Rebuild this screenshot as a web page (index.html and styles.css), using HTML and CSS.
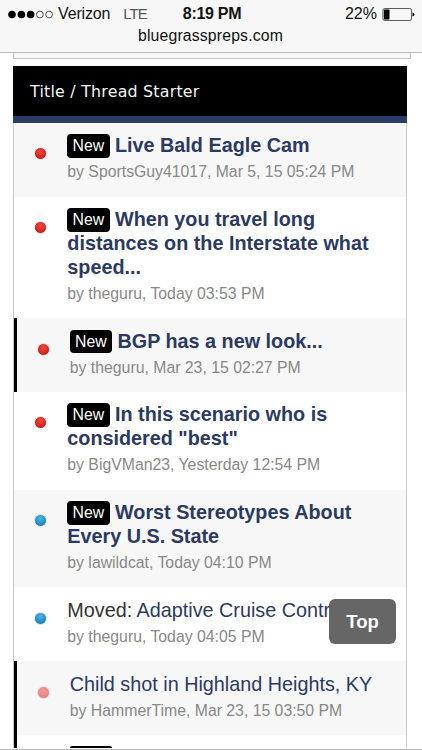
FILE: index.html
```html
<!DOCTYPE html>
<html lang="en">
<head>
<meta charset="utf-8">
<meta name="viewport" content="width=device-width">
<title>bluegrasspreps.com</title>
<link rel="stylesheet" href="styles.css">
</head>
<body>
<header class="browser">
  <div class="status">
    <div class="carrier">
      <svg width="46" height="9" viewBox="0 0 46 9" aria-hidden="true">
        <circle cx="4" cy="4.5" r="3.8"/><circle cx="13.4" cy="4.5" r="3.8"/><circle cx="22.6" cy="4.5" r="3.8"/>
        <g fill="none" stroke="#222" stroke-width=".8"><circle cx="31.9" cy="4.5" r="3.4"/><circle cx="41.1" cy="4.5" r="3.4"/></g>
      </svg>
      <span class="name">Verizon</span><span class="lte">LTE</span>
    </div>
    <div class="clock">8:19 PM</div>
    <div class="power">
      <span>22%</span>
      <svg width="34" height="13" viewBox="0 0 34 13" aria-hidden="true">
        <rect x=".9" y=".5" width="28.6" height="12" rx="1.8" fill="none" stroke="#333" stroke-width=".8"/>
        <rect x="1.9" y="1.5" width="5.6" height="10" rx=".7"/>
        <path d="M30.5 4.4q2 .4 2 2.1t-2 2.1z"/>
      </svg>
    </div>
  </div>
  <div class="address">bluegrasspreps.com</div>
</header>
<main>
  <div class="strip"></div>
  <section class="threads">
    <h1>Title / Thread Starter</h1>
    <ul>
      <li class="alt"><i class="dot red"></i><div><h2><b class="new">New</b> Live Bald Eagle Cam</h2><p>by SportsGuy41017, Mar 5, 15 05:24 PM</p></div></li>
      <li><i class="dot red"></i><div><h2><b class="new">New</b> When you travel long<br>distances on the Interstate what<br>speed...</h2><p>by theguru, Today 03:53 PM</p></div></li>
      <li class="alt mark"><i class="dot red"></i><div><h2><b class="new">New</b> BGP has a new look...</h2><p>by theguru, Mar 23, 15 02:27 PM</p></div></li>
      <li><i class="dot red"></i><div><h2><b class="new">New</b> In this scenario who is<br>considered "best"</h2><p>by BigVMan23, Yesterday 12:54 PM</p></div></li>
      <li class="alt"><i class="dot blue"></i><div><h2><b class="new">New</b> Worst Stereotypes About<br>Every U.S. State</h2><p>by lawildcat, Today 04:10 PM</p></div></li>
      <li><i class="dot blue"></i><div><h2 class="read"><span>Moved:</span> Adaptive Cruise Control</h2><p>by theguru, Today 04:05 PM</p></div></li>
      <li class="alt mark"><i class="dot red faded"></i><div><h2 class="read">Child shot in Highland Heights, KY</h2><p>by HammerTime, Mar 23, 15 03:50 PM</p></div></li>
      <li class="mark last"><b class="peek"></b></li>
    </ul>
  </section>
</main>
<button class="top">Top</button>
</body>
</html>
```
FILE: styles.css
```css
* { box-sizing: border-box; }
body {
  margin: 0;
  height: 750px;
  overflow: hidden;
  position: relative;
  background: #fff;
  font-family: "Liberation Sans", Arial, sans-serif;
  border-bottom: 1px solid #b5b5b5;
}
h1, h2, p, ul { margin: 0; padding: 0; }
.browser {
  height: 53px;
  background: #f7f7f7;
  border-bottom: 1px solid #bababa;
  color: #111;
}
.status {
  display: grid;
  grid-template-columns: 1fr auto 1fr;
  height: 27px;
  padding: 1px 6px 0 8px;
  align-items: center;
  font-size: 16px;
  line-height: 26px;
}
.carrier { display: flex; align-items: center; white-space: nowrap; }
.name { margin-left: 4px; letter-spacing: -.15px; }
.lte { margin-left: 13px; color: #555; font-size: 15px; letter-spacing: -1px; }
.clock { font-weight: bold; font-size: 16px; letter-spacing: -.3px; }
.power { display: flex; align-items: center; justify-content: flex-end; gap: 5px; }
.address { text-align: center; font-size: 15.8px; line-height: 18px; letter-spacing: .15px; padding-right: 1px; }
.strip {
  height: 6px;
  margin: 0 11px 7px 13px;
  border: 1px solid #c6c6c6;
  border-top: 0;
  background: #f7f7f7;
}
.threads { margin: 0 15px 0 13px; }
h1 {
  height: 57px;
  background: #000;
  color: #f5f5f5;
  border-bottom: 7px solid #2e3a66;
  padding: 1px 17px 0;
  font: 15.8px/50px "DejaVu Sans", sans-serif;
  letter-spacing: .24px;
}
ul {
  list-style: none;
  border: solid #c8c8c8;
  border-width: 0 1px;
}
li {
  display: flex;
  align-items: flex-start;
  min-height: 73.7px;
  padding: 10.4px 0 14.3px 20px;
}
.alt { background: #f7f7f7; }
.mark { border-left: 3px solid #000; padding-left: 19.5px; }
.dot {
  flex: none;
  width: 13px;
  height: 13px;
  margin: 14px 20.3px 0 0;
  border-radius: 50%;
  border: 1px solid #dedede;
}
.red { background: radial-gradient(circle at 50% 35%, #ef4b3d, #d4211d 65%, #b51916); }
.blue { background: radial-gradient(circle at 50% 30%, #4db5de, #218fc5 60%, #1473a5); }
.faded { background: radial-gradient(circle at 50% 35%, #f39a96, #e98784 65%, #dc7a78); }
h2 {
  font-size: 19.8px;
  line-height: 24px;
  color: #2c3962;
  white-space: nowrap;
}
.read { font-weight: normal; }
.read span { color: #333; }
.new {
  display: inline-block;
  height: 23.5px;
  padding: 0 5.3px;
  border-radius: 4px;
  background: #000;
  color: #fff;
  font-size: 15.8px;
  font-weight: normal;
  line-height: 23.5px;
  vertical-align: top;
  margin-top: 1px;
  margin-bottom: -1px;
}
.last {
  min-height: 0;
  height: 13.5px;
  padding: 11.6px 0 0 52.8px;
}
.peek {
  width: 42px;
  height: 2px;
  border-radius: 2px 2px 0 0;
  background: #000;
}
p {
  margin-top: 4px;
  font-size: 15.8px;
  line-height: 21px;
  color: #888;
  white-space: nowrap;
}
.top {
  position: absolute;
  left: 329px;
  top: 599px;
  width: 67px;
  height: 45px;
  padding: 0;
  border: 0;
  border-radius: 6px;
  background: #666;
  color: #fff;
  font: bold 18.5px/46px "Liberation Sans", Arial, sans-serif;
}
```
